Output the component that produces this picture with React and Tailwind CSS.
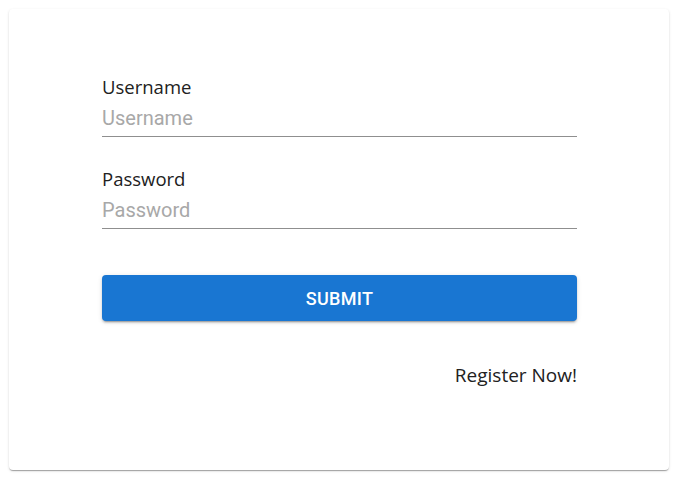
export default function App() {
	return (
		<main className="min-h-screen bg-white p-[9px]">
			{/* card */}
			<div className="h-[461px] w-[660px] rounded bg-white pl-[93px] pr-[92px] pt-[66px] shadow-[0_2px_1px_-1px_rgba(0,0,0,0.2),0_1px_1px_0_rgba(0,0,0,0.14),0_1px_3px_0_rgba(0,0,0,0.12)]">
				<form className="flex flex-col" onSubmit={(e) => e.preventDefault()}>
					<label className="font-['Open_Sans','Noto_Sans',sans-serif] text-[18.5px] leading-6 text-[#212121]">Username</label>
					<input
						type="text"
						placeholder="Username"
						className="border-b border-[#8f8f8f] pt-[5px] pb-[4px] font-['Roboto',sans-serif] text-[20px] leading-[28px] text-[#212121] outline-none placeholder:text-[#a8a8a8]"
					/>

					<label className="mt-[30px] font-['Open_Sans','Noto_Sans',sans-serif] text-[18.5px] leading-6 text-[#212121]">Password</label>
					<input
						type="password"
						placeholder="Password"
						className="border-b border-[#8f8f8f] pt-[5px] pb-[4px] font-['Roboto',sans-serif] text-[20px] leading-[28px] text-[#212121] outline-none placeholder:text-[#a8a8a8]"
					/>

					<button
						type="submit"
						className="mt-[46px] h-[46px] rounded bg-[#1976d2] font-['Roboto',sans-serif] text-[18px] font-medium tracking-[0.3px] text-white shadow-[0_3px_1px_-2px_rgba(0,0,0,0.2),0_2px_2px_0_rgba(0,0,0,0.14),0_1px_5px_0_rgba(0,0,0,0.12)]"
					>
						SUBMIT
					</button>

					<div className="mt-[42px] flex justify-end">
						<a className="font-['Open_Sans','Noto_Sans',sans-serif] text-[19px] leading-6 text-[#212121]">Register Now!</a>
					</div>
				</form>
			</div>
		</main>
	);
}
